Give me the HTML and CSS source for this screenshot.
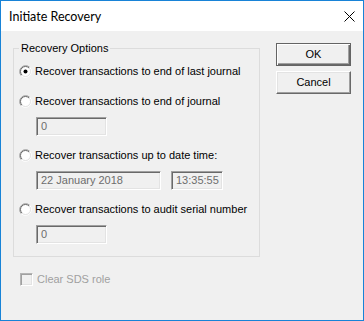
FILE: index.html
```html
<!DOCTYPE html>
<html>
<head>
<meta charset="utf-8">
<link rel="stylesheet" href="styles.css">
</head>
<body>
<div class="window">
  <div class="titlebar">
    <span class="title">Initiate Recovery</span>
    <svg class="close" width="11" height="11" viewBox="0 0 11 11"><path d="M0.5 0.5 L10.5 10.5 M10.5 0.5 L0.5 10.5" stroke="#000" stroke-width="1" fill="none"/></svg>
  </div>
  <div class="client">
    <div class="top">
      <fieldset class="group">
        <legend>Recovery Options</legend>
        <div class="radio">
          <svg class="rb" width="13" height="13" viewBox="0 0 13 13">
            <circle cx="6.5" cy="6.5" r="5" fill="#fff"/>
            <path d="M2.26 10.74 A6 6 0 0 1 10.74 2.26" stroke="#a0a0a0" fill="none"/>
            <path d="M10.74 2.26 A6 6 0 0 1 2.26 10.74" stroke="#ffffff" fill="none"/>
            <path d="M2.96 10.04 A5 5 0 0 1 10.04 2.96" stroke="#696969" fill="none"/>
            <path d="M10.04 2.96 A5 5 0 0 1 2.96 10.04" stroke="#e3e3e3" fill="none"/>
            <circle cx="6.5" cy="6.5" r="2" fill="#000"/>
          </svg>
          <span>Recover transactions to end of last journal</span>
        </div>
        <div class="radio gap17">
          <svg class="rb" width="13" height="13" viewBox="0 0 13 13">
            <circle cx="6.5" cy="6.5" r="5" fill="#fff"/>
            <path d="M2.26 10.74 A6 6 0 0 1 10.74 2.26" stroke="#a0a0a0" fill="none"/>
            <path d="M10.74 2.26 A6 6 0 0 1 2.26 10.74" stroke="#ffffff" fill="none"/>
            <path d="M2.96 10.04 A5 5 0 0 1 10.04 2.96" stroke="#696969" fill="none"/>
            <path d="M10.04 2.96 A5 5 0 0 1 2.96 10.04" stroke="#e3e3e3" fill="none"/>
          </svg>
          <span>Recover transactions to end of journal</span>
        </div>
        <div class="fields">
          <div class="tb w71">0</div>
        </div>
        <div class="radio gap13">
          <svg class="rb" width="13" height="13" viewBox="0 0 13 13">
            <circle cx="6.5" cy="6.5" r="5" fill="#fff"/>
            <path d="M2.26 10.74 A6 6 0 0 1 10.74 2.26" stroke="#a0a0a0" fill="none"/>
            <path d="M10.74 2.26 A6 6 0 0 1 2.26 10.74" stroke="#ffffff" fill="none"/>
            <path d="M2.96 10.04 A5 5 0 0 1 10.04 2.96" stroke="#696969" fill="none"/>
            <path d="M10.04 2.96 A5 5 0 0 1 2.96 10.04" stroke="#e3e3e3" fill="none"/>
          </svg>
          <span>Recover transactions up to date time:</span>
        </div>
        <div class="fields">
          <div class="tb w125">22 January 2018</div>
          <div class="tb w52">13:35:55</div>
        </div>
        <div class="radio gap13">
          <svg class="rb" width="13" height="13" viewBox="0 0 13 13">
            <circle cx="6.5" cy="6.5" r="5" fill="#fff"/>
            <path d="M2.26 10.74 A6 6 0 0 1 10.74 2.26" stroke="#a0a0a0" fill="none"/>
            <path d="M10.74 2.26 A6 6 0 0 1 2.26 10.74" stroke="#ffffff" fill="none"/>
            <path d="M2.96 10.04 A5 5 0 0 1 10.04 2.96" stroke="#696969" fill="none"/>
            <path d="M10.04 2.96 A5 5 0 0 1 2.96 10.04" stroke="#e3e3e3" fill="none"/>
          </svg>
          <span>Recover transactions to audit serial number</span>
        </div>
        <div class="fields">
          <div class="tb w71">0</div>
        </div>
      </fieldset>
      <div class="buttons">
        <div class="btn default">OK</div>
        <div class="btn">Cancel</div>
      </div>
    </div>
    <div class="check">
      <span class="cb"></span>
      <span class="cblabel">Clear SDS role</span>
    </div>
  </div>
</div>
</body>
</html>
```

FILE: styles.css
```css
html, body {
  margin: 0;
  padding: 0;
  background: #f0f0f0;
}
.window {
  width: 364px;
  height: 321px;
  box-sizing: border-box;
  border: 1px solid #1883d7;
  background: #f0f0f0;
  display: flex;
  flex-direction: column;
  font-family: "Liberation Sans", Arial, sans-serif;
  font-size: 11px;
  color: #000;
}
.titlebar {
  height: 30px;
  background: #fff;
  display: flex;
  align-items: center;
  justify-content: space-between;
  padding: 0 8px 0 8px;
  flex: none;
}
.title {
  font-family: Lato, "Noto Sans", sans-serif;
  font-size: 12.5px;
  color: #000;
}
.close {
  display: block;
}
.client {
  padding: 11px 0 0 12px;
  flex: 1;
}
.top {
  display: flex;
  align-items: flex-start;
}
.group {
  margin: 0;
  width: 247px;
  box-sizing: border-box;
  border: 1px solid #dcdcdc;
  padding: 10px 0 12px 5px;
  min-width: 0;
  display: flex;
  flex-direction: column;
}
.group legend {
  padding: 0 2px;
  margin: 0;
  line-height: 13px;
  font-size: 11px;
}
.radio {
  display: flex;
  align-items: center;
  height: 13px;
  line-height: 13px;
  white-space: nowrap;
}
.radio .rb {
  display: block;
  flex: none;
  margin-right: 3px;
}
.gap17 { margin-top: 17px; }
.gap13 { margin-top: 13px; }
.fields {
  display: flex;
  gap: 10px;
  margin-top: 9px;
  margin-left: 17px;
}
.tb {
  height: 19px;
  box-sizing: border-box;
  border-top: 1px solid #a0a0a0;
  border-left: 1px solid #a0a0a0;
  border-bottom: 1px solid #ffffff;
  border-right: 1px solid #ffffff;
  box-shadow: inset 1px 1px 0 #696969, inset -1px -1px 0 #e3e3e3;
  background: #f0f0f0;
  color: #6d6d6d;
  padding: 0 0 0 4px;
  line-height: 17px;
  white-space: nowrap;
}
.w71 { width: 71px; }
.w125 { width: 125px; }
.w52 { width: 52px; }
.buttons {
  display: flex;
  flex-direction: column;
  gap: 5px;
  margin-left: 16px;
  margin-top: 1px;
}
.btn {
  width: 75px;
  height: 23px;
  box-sizing: border-box;
  background: #f0f0f0;
  border-top: 1px solid #ffffff;
  border-left: 1px solid #ffffff;
  border-right: 1px solid #696969;
  border-bottom: 1px solid #696969;
  box-shadow: inset -1px -1px 0 #a0a0a0, inset 1px 1px 0 #e3e3e3;
  display: flex;
  align-items: center;
  justify-content: center;
  line-height: 13px;
}
.btn.default {
  border: 1px solid #646464;
  box-shadow: inset 1px 1px 0 #ffffff, inset -1px -1px 0 #696969, inset -2px -2px 0 #a0a0a0;
}
.check {
  display: flex;
  align-items: center;
  height: 13px;
  margin-top: 16px;
  margin-left: 7px;
}
.cb {
  width: 13px;
  height: 13px;
  box-sizing: border-box;
  border-top: 1px solid #b4b4b4;
  border-left: 1px solid #b4b4b4;
  border-bottom: 1px solid #ffffff;
  border-right: 1px solid #ffffff;
  box-shadow: inset 1px 1px 0 #a0a0a0, inset -1px -1px 0 #e3e3e3;
  background: #f0f0f0;
  flex: none;
}
.cblabel {
  margin-left: 4px;
  color: #a0a0a0;
  line-height: 13px;
}
```
